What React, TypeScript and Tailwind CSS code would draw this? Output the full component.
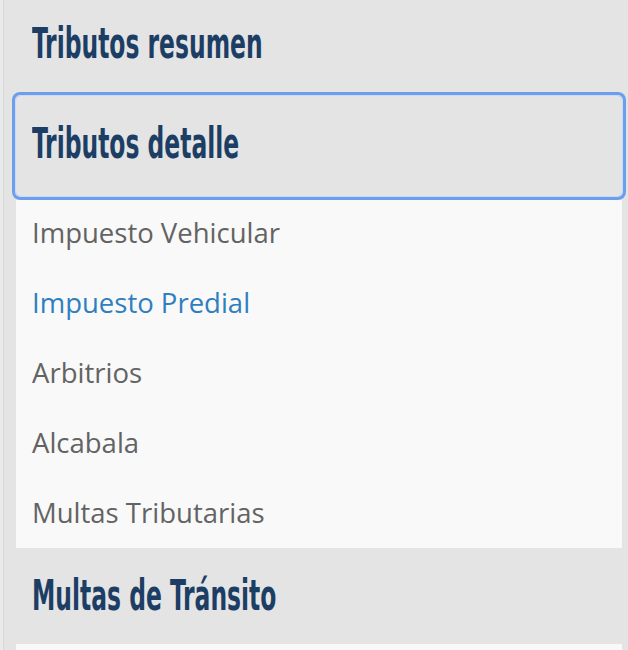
import React from "react";

type Item = { label: string; active?: boolean };

const items: Item[] = [
  { label: "Impuesto Vehicular" },
  { label: "Impuesto Predial", active: true },
  { label: "Arbitrios" },
  { label: "Alcabala" },
  { label: "Multas Tributarias" },
];

const headFont = {
  fontFamily: '"DejaVu Sans Condensed", "Liberation Sans Narrow", sans-serif',
};

function Heading({ title, className = "" }: { title: string; className?: string }) {
  return (
    <div className={`flex items-center px-4 ${className}`}>
      <span
        className="inline-block origin-left scale-x-[0.62] text-[42px] leading-none font-bold whitespace-nowrap text-[#1d3e64]"
        style={headFont}
      >
        {title}
      </span>
    </div>
  );
}

export default function App() {
  return (
    <div className="flex min-h-screen w-full overflow-hidden bg-[#e4e4e4] font-['Open_Sans',sans-serif]">
      <div className="w-[4px] shrink-0 border-r border-[#d8d8d8] bg-[#eaeaea]" />
      <div className="ml-3 mr-[6px] flex flex-1 flex-col">
        <Heading title="Tributos resumen" className="h-[96px] pb-2" />
        <div className="relative z-10 rounded-[4px] shadow-[0_0_0_1px_#c8dbf8,0_0_0_4px_#6d9eeb]">
          <Heading title="Tributos detalle" className="h-[100px] pb-1" />
        </div>
        <ul className="bg-[#f9f9f9] pt-[2px]">
          {items.map((item) => (
            <li
              key={item.label}
              className={`flex h-[70px] items-center px-4 text-[27.5px] ${
                item.active ? "text-[#2f7fbf]" : "text-[#636363]"
              }`}
            >
              {item.label}
            </li>
          ))}
        </ul>
        <Heading title="Multas de Tránsito" className="h-[96px]" />
        <div className="h-4 bg-[#f9f9f9]" />
      </div>
    </div>
  );
}
